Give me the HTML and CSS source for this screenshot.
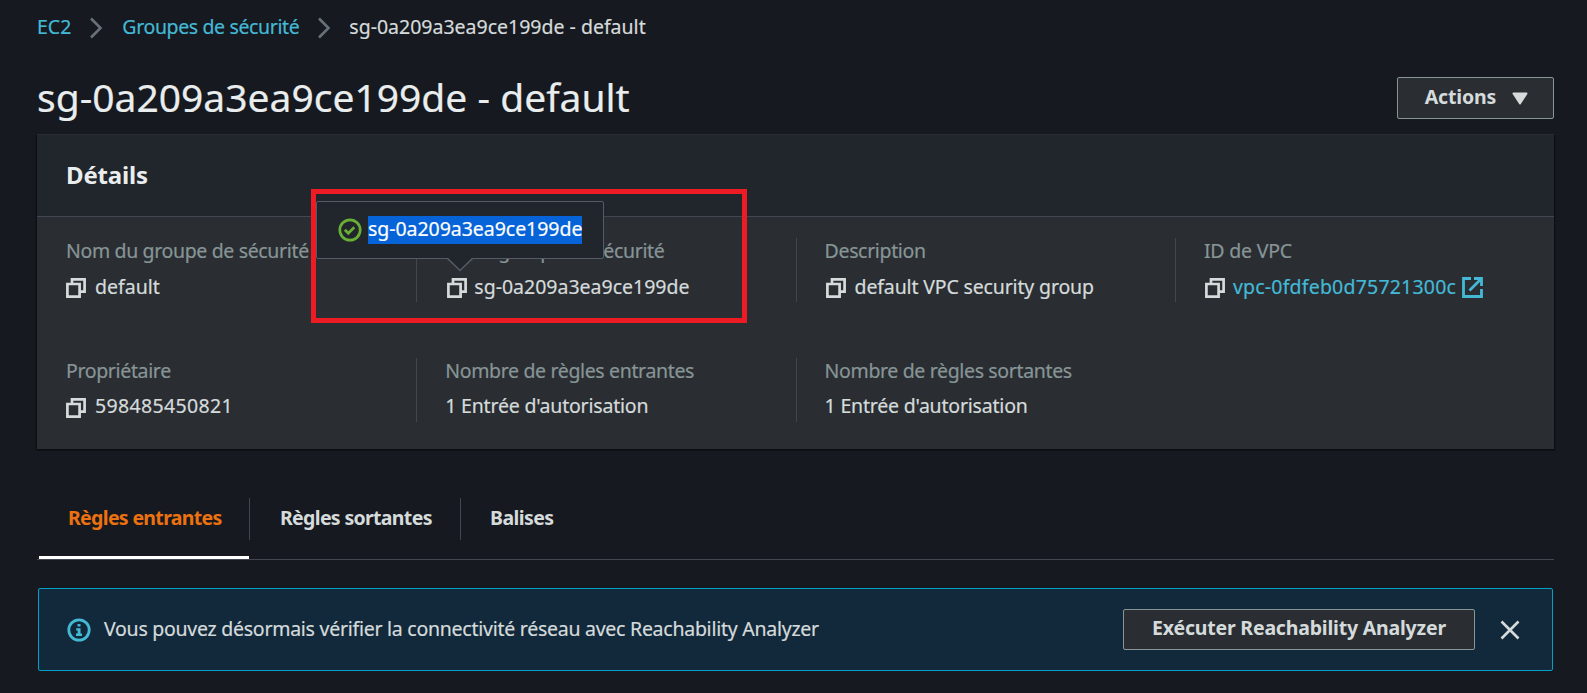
FILE: index.html
```html
<!DOCTYPE html>
<html lang="fr">
<head>
<meta charset="utf-8">
<title>sg-0a209a3ea9ce199de - default</title>
<link rel="stylesheet" href="styles.css">
</head>
<body>
<svg class="defs" aria-hidden="true">
  <symbol id="copy" viewBox="0 0 20 20"><path d="M1.4 6h12.2v12.6H1.4zM6 6V1.4h12.6v12.2h-5"/></symbol>
  <symbol id="chevron" viewBox="0 0 14 22"><path d="M2 1.500 11.500 11 2 20.500"/></symbol>
</svg>
<main class="page">
  <nav class="crumbs">
    <a class="crumb-ec2">EC2</a>
    <svg class="chevron"><use href="#chevron"/></svg>
    <a class="crumb-groups">Groupes de sécurité</a>
    <svg class="chevron"><use href="#chevron"/></svg>
    <span class="crumb-current">sg-0a209a3ea9ce199de - default</span>
  </nav>
  <header class="heading">
    <h1>sg-0a209a3ea9ce199de - default</h1>
    <button class="btn actions"><span>Actions</span><svg class="caret" viewBox="0 0 16 13"><path d="M1.500 1.500h13L8 11.500z"/></svg></button>
  </header>

  <section class="card">
    <h2>Détails</h2>
    <div class="details">
      <div class="item"><div class="label">Nom du groupe de sécurité</div><div class="value"><svg class="copy"><use href="#copy"/></svg><span>default</span></div></div>
      <div class="item"><div class="label">ID du groupe de sécurité</div><div class="value tight"><svg class="copy near"><use href="#copy"/></svg><span>sg-0a209a3ea9ce199de</span></div></div>
      <div class="item"><div class="label">Description</div><div class="value"><svg class="copy"><use href="#copy"/></svg><span class="t-desc">default VPC security group</span></div></div>
      <div class="item"><div class="label short">ID de VPC</div><div class="value tight"><svg class="copy"><use href="#copy"/></svg><a class="t-vpc">vpc-0fdfeb0d75721300c</a><svg class="external" viewBox="0 0 21 21"><path d="M9 1.500H1.500v18h18V12M12 1.500h7.500V9M19 2 7.500 13.500"/></svg></div></div>
      <div class="item second"><div class="label">Propriétaire</div><div class="value"><svg class="copy"><use href="#copy"/></svg><span class="t-owner">598485450821</span></div></div>
      <div class="item second"><div class="label">Nombre de règles entrantes</div><div class="value"><span class="t-auth">1 Entrée d'autorisation</span></div></div>
      <div class="item second"><div class="label">Nombre de règles sortantes</div><div class="value"><span class="t-auth">1 Entrée d'autorisation</span></div></div>
    </div>
  </section>

  <div class="tabs">
    <div class="tab active">Règles entrantes</div>
    <div class="tab outgoing">Règles sortantes</div>
    <div class="tab tags">Balises</div>
  </div>

  <div class="alert">
    <svg class="info" viewBox="0 0 24 24"><circle cx="12" cy="12" r="10.200"/><path d="M10.500 6h3v2.600h-3zM9.200 10.200h4.300v5.300H15V18H9v-2.500h1.700v-3H9.200z"/></svg>
    <span class="message">Vous pouvez désormais vérifier la connectivité réseau avec Reachability Analyzer</span>
    <button class="btn run"><span>Exécuter Reachability Analyzer</span></button>
    <svg class="close" viewBox="0 0 20 20"><path d="M1.500 1.500l17 17M18.500 1.500l-17 17"/></svg>
  </div>
</main>

<div class="tooltip">
  <svg class="check" viewBox="0 0 24 24"><circle cx="12" cy="12" r="10.200"/><path d="M6.800 11.800l3.500 3.500 6-6"/></svg>
  <span class="selected">sg-0a209a3ea9ce199de</span>
  <svg class="arrow" viewBox="0 0 28 14"><path d="M1 0 14 12.500 27 0"/></svg>
</div>
<div class="highlight"></div>
</body>
</html>
```
FILE: styles.css
```css
* { box-sizing: border-box; }
body {
  margin: 0;
  height: 693px;
  overflow: hidden;
  background: #16191f;
  color: #d5dbdb;
  font: 19.5px/27px "Noto Sans", "Open Sans", sans-serif;
  -webkit-text-stroke: 0.2px currentColor;
  white-space: nowrap;
}
svg { flex: none; fill: none; }
.defs { position: absolute; width: 0; height: 0; }
a { color: #44b9d6; }
.page { padding: 0 33px 0 37px; }

.crumbs { display: flex; align-items: center; height: 54px; }
.crumbs a, .crumbs span { margin-bottom: 2px; }
.crumb-groups { letter-spacing: -0.37px; margin-left: 1px; }
.chevron { width: 14px; height: 22px; stroke: #687078; stroke-width: 2.6; margin: 2px 18px 0; }

.heading { display: flex; justify-content: space-between; height: 80px; padding-top: 23px; }
h1 { margin: 0; font-size: 39px; line-height: 39px; font-weight: 400; color: #eaeded; }
.btn {
  display: flex; align-items: center; justify-content: center;
  border: 1px solid #879596; border-radius: 2px;
  background: #2a2e33; color: #d5dbdb;
  font: 700 19.5px/27px "Noto Sans", "Open Sans", sans-serif;
  -webkit-text-stroke: 0;
  padding: 0 0 4px;
}
.actions { width: 157px; height: 42px; gap: 16px; letter-spacing: -0.15px; padding-left: 2px; }
.caret { width: 16px; height: 13px; margin-top: 4px; fill: #d5dbdb; stroke: #d5dbdb; stroke-width: 2; stroke-linejoin: round; }

.card { height: 315px; background: #2a2e33; border-top: 1px solid #2a2e33; box-shadow: 0 1px 1px #0b0d10, 1px 1px 1px #0f1115, -1px 1px 1px #0f1115; }
h2 {
  margin: 0; height: 82px; padding: 0 29px; line-height: 79px;
  font-size: 24px; font-weight: 700; color: #eaeded; letter-spacing: -0.15px;
  -webkit-text-stroke: 0;
  background: #21252c; border-bottom: 1px solid #414750;
}
.details { display: grid; grid-template-columns: repeat(4, 379.3px); row-gap: 56px; padding-top: 21px; }
.item { height: 64px; padding-left: 28px; border-left: 1px solid #414750; }
.item:nth-child(4n+1) { border-color: transparent; }
.label { height: 27px; line-height: 25px; color: #879596; letter-spacing: -0.35px; }
.label.short { letter-spacing: -0.2px; }
.value { display: flex; align-items: center; height: 27px; margin-top: 9px; }
.value span, .value a { margin-bottom: 2px; }
.second .value { margin-top: 8px; }
.second .value .copy { margin-top: 2px; }
.t-desc { letter-spacing: -0.15px; }
.t-vpc { letter-spacing: 0.21px; }
.t-owner { letter-spacing: 0.35px; }
.t-auth { letter-spacing: -0.2px; }
.copy { width: 20px; height: 20px; margin-right: 9px; stroke: #d5dbdb; stroke-width: 2.7; }
.value .copy { margin-top: 1px; }
.item:nth-child(3) .copy { margin-left: 1px; }
.value.tight .copy { margin: 0 8px 0 1px; }
.value.tight .copy.near { margin: 0 7px 0 2px; }
.external { width: 21px; height: 21px; margin-left: 6px; stroke: #44b9d6; stroke-width: 2.8; }

.tabs { display: flex; height: 62px; margin-top: 49px; border-bottom: 1px solid #414750; padding-left: 2px; }
.tab { position: relative; height: 61px; padding: 6px 0 0 29px; font-weight: 700; letter-spacing: -0.67px; -webkit-text-stroke: 0; }
.tab + .tab { padding-left: 31px; }
.tab + .tab::before { content: ""; position: absolute; left: 0; top: 0; width: 1px; height: 42px; background: #414750; }
.tab.active { width: 210px; color: #ec7211; border-bottom: 3px solid #fff; }
.tab.outgoing { width: 211px; }
.tab.tags { padding-left: 30px; letter-spacing: -0.57px; }

.alert {
  display: flex; align-items: center; height: 83px; margin: 28px 1px 0;
  border: 1px solid #00a1c9; border-radius: 2px; background: #12293b;
  padding: 0 32px 0 28px;
}
.info { width: 24px; height: 24px; }
.info circle { stroke: #44b9d6; stroke-width: 2.8; }
.info path { fill: #44b9d6; }
.message { margin: 0 0 2px 13px; letter-spacing: -0.256px; }
.run { width: 352px; height: 41px; margin-left: auto; letter-spacing: -0.2px; }
.close { width: 20px; height: 20px; margin-left: 25px; stroke: #d5dbdb; stroke-width: 2.6; }

.tooltip {
  position: absolute; left: 316px; top: 201px; width: 288px; height: 58px;
  display: flex; align-items: center; padding-left: 21px;
  background: #21252c; border: 1px solid #545b64; border-radius: 2px;
}
.check { width: 24px; height: 24px; margin-right: 6px; stroke: #6aaf35; stroke-width: 2.7; }
.selected { height: 28px; line-height: 25px; letter-spacing: -0.04px; background: #0764d8; color: #fff; }
.arrow { position: absolute; left: 129px; top: 56px; width: 28px; height: 14px; stroke: #545b64; stroke-width: 1.6; fill: #21252c; }
.highlight { position: absolute; left: 311px; top: 189px; width: 436px; height: 134px; border: 5px solid #ed1c24; }
```
